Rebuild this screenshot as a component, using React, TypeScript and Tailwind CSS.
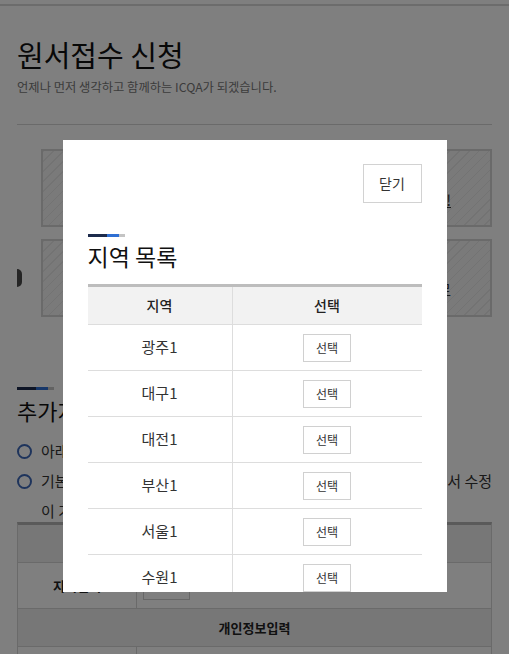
import React from "react";

const regions = ["광주1", "대구1", "대전1", "부산1", "서울1", "수원1", "울산1", "인천1"];

function SectionBar() {
  return (
    <div className="flex h-[3px] w-[37px]">
      <span className="w-[19px] bg-[#1d2b4c]" />
      <span className="w-[12px] bg-[#2f6fd3]" />
      <span className="w-[6px] bg-[#c4c4c4]" />
    </div>
  );
}

function HatchBox({ top, bottom, underline }: { top: string; bottom: string; underline?: boolean }) {
  return (
    <div className="flex h-[78px] flex-1 flex-col justify-center border-2 border-[#d5d5d5] bg-[#f5f5f5] bg-[repeating-linear-gradient(135deg,#e6e6e6_0,#e6e6e6_1px,transparent_1px,transparent_7px)] text-[15px] leading-[24px] text-[#333]">
      <p className="text-center">{top}</p>
      <p className={"pr-[39px] text-right " + (underline ? "underline" : "")}>{bottom}</p>
    </div>
  );
}

function Page() {
  return (
    <div className="min-h-[654px] bg-white pb-10 text-[#222]">
      <div className="h-[4px]" />
      <div className="h-[2px] bg-[#d8d8d8]" />
      <div className="px-[17px] pt-[30px]">
        <h1 className="text-[29px] leading-[37px] text-[#111]">원서접수 신청</h1>
        <p className="mt-[5px] text-[12.3px] leading-[18px] text-[#777]">
          언제나 먼저 생각하고 함께하는 ICQA가 되겠습니다.
        </p>
        <div className="mt-[28px] h-px bg-[#d4d4d4]" />

        <div className="mt-[24px] flex flex-col gap-[12px]">
          <div className="flex">
            <div className="w-[24px]" />
            <HatchBox top="원서접수 안내" bottom="원서접수 기간을 꼭 확인하시고 신청하세요!" underline />
          </div>
          <div className="flex items-center">
            <div className="w-[24px]">
              <span className="block h-[18px] w-[5px] rounded-r-full bg-[#4a4a4a]" />
            </div>
            <HatchBox top="시험 일정 안내" bottom="시험 일정은 공지사항을 참고하시기 바랍니다로" />
          </div>
        </div>

        <div className="mt-[70px]">
          <SectionBar />
        </div>
        <h2 className="mt-[5px] text-[22px] leading-[30px] text-[#111]">추가지역 선택</h2>
        <div className="mt-[11px] text-[15px] leading-[30px] text-[#333]">
          <div className="flex items-center gap-[9px]">
            <span className="h-[15px] w-[15px] shrink-0 rounded-full border-2 border-[#3d68b8]" />
            <span>아래 내용을 확인하여 주시기 바랍니다.</span>
          </div>
          <div className="flex items-center gap-[9px]">
            <span className="h-[15px] w-[15px] shrink-0 rounded-full border-2 border-[#3d68b8]" />
            <span className="flex flex-1 justify-between">
              <span>기본정보 변경은 회원정보</span>
              <span>페이지에서 수정</span>
            </span>
          </div>
          <p className="pl-[24px]">이 가능합니다.</p>
        </div>

        <div className="mt-[-4px] border-x border-t-[3px] border-[#d5d5d5] border-t-[#b4b4b4] text-[13px]">
          <div className="flex h-[38px] items-center justify-center border-b border-[#d5d5d5] bg-[#eeeeee] font-bold">
            시험지역
          </div>
          <div className="flex h-[46px] border-b border-[#d5d5d5]">
            <div className="flex w-[119px] items-center justify-center border-r border-[#d5d5d5] font-bold">
              지역선택
            </div>
            <div className="flex flex-1 items-center px-[6px]">
              <span className="flex h-[28px] w-[47px] items-center justify-center border border-[#cfcfcf] text-[12px]">
                선택
              </span>
            </div>
          </div>
          <div className="flex h-[38px] items-center justify-center border-b border-[#d5d5d5] bg-[#eeeeee] font-bold">
            개인정보입력
          </div>
          <div className="flex h-[46px] border-b border-[#d5d5d5]">
            <div className="flex w-[119px] items-center justify-center border-r border-[#d5d5d5] font-bold">
              이름
            </div>
            <div className="flex-1" />
          </div>
        </div>
      </div>
    </div>
  );
}

function RegionModal() {
  return (
    <div className="fixed inset-0 bg-black/50">
      <div className="mx-auto mt-[140px] h-[452px] w-[384px] overflow-hidden bg-white px-[25px] pt-[24px]">
        <div className="flex justify-end">
          <button className="h-[39px] w-[59px] border border-[#d2d2d2] bg-white text-[14px] text-[#333]">
            닫기
          </button>
        </div>
        <div className="mt-[31px]">
          <SectionBar />
        </div>
        <h3 className="mt-[4px] text-[23px] leading-[30px] text-[#111]">지역 목록</h3>
        <div className="mt-[13px] border-t-[3px] border-[#bdbdbd]">
          <div className="flex h-[38px] border-b border-[#dddddd] bg-[#f2f2f2] text-[14px] font-medium text-[#222]">
            <div className="flex w-[145px] items-center justify-center border-r border-[#dddddd]">지역</div>
            <div className="flex flex-1 items-center justify-center">선택</div>
          </div>
          {regions.map((r) => (
            <div key={r} className="flex h-[46px] border-b border-[#dddddd]">
              <div className="flex w-[145px] items-center justify-center border-r border-[#dddddd] text-[15px] text-[#333]">
                {r}
              </div>
              <div className="flex flex-1 items-center justify-center">
                <button className="flex h-[28px] w-[48px] items-center justify-center border border-[#d0d0d0] bg-white text-[12px] text-[#333]">
                  선택
                </button>
              </div>
            </div>
          ))}
        </div>
      </div>
    </div>
  );
}

export default function App() {
  return (
    <div className="relative font-['Noto_Sans_CJK_KR','Noto_Sans',sans-serif]">
      <Page />
      <RegionModal />
    </div>
  );
}
